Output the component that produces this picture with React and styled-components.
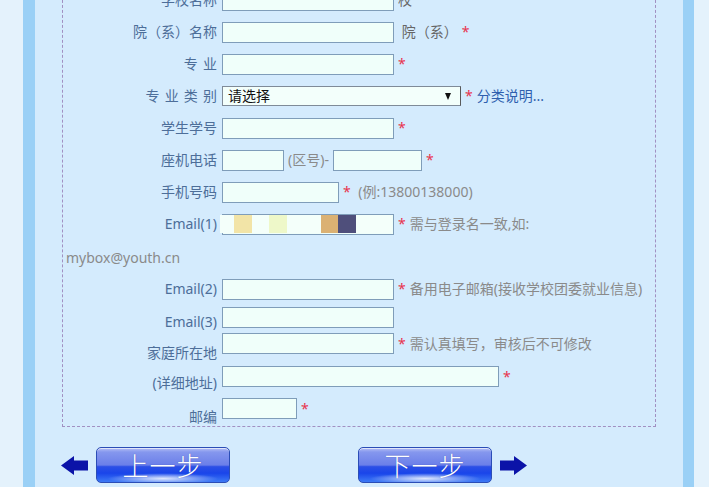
import React from 'react'
import styled, { createGlobalStyle, css } from 'styled-components'

const GlobalStyle = createGlobalStyle`
  html, body {
    margin: 0;
    height: 100%;
    overflow: hidden;
    background: #e4f2fc;
    font-family: "Noto Sans", "Noto Sans CJK SC", sans-serif;
    font-size: 14px;
  }
`

const ArrowIcon = ({ dir }) => (
  <svg width="27" height="19" viewBox="0 0 27 19">
    <path
      d="M0 9.5 L13 0 L13 4.5 L27 4.5 L27 14.5 L13 14.5 L13 19 Z"
      fill="#0b13a8"
      transform={dir === 'right' ? 'translate(27 0) scale(-1 1)' : undefined}
    />
  </svg>
)

export default function App() {
  return (
    <>
      <GlobalStyle />
      <Page>
        <Frame>
          <FormBox>
            <Row $h={32}>
              <Label>学校名称</Label>
              <Field>
                <Input $w={172} />
                <Unit>校</Unit>
              </Field>
            </Row>
            <Row $h={32}>
              <Label>院（系）名称</Label>
              <Field>
                <Input $w={172} />
                <Unit> 院（系）</Unit>
                <Star>*</Star>
              </Field>
            </Row>
            <Row $h={32}>
              <Label>专 业</Label>
              <Field>
                <Input $w={172} />
                <Star>*</Star>
              </Field>
            </Row>
            <Row $h={32}>
              <Label>专 业 类 别</Label>
              <Field>
                <FakeSelect>
                  <span>请选择</span>
                  <Caret />
                </FakeSelect>
                <Star>*</Star>
                <HelpLink>分类说明...</HelpLink>
              </Field>
            </Row>
            <Row $h={32}>
              <Label>学生学号</Label>
              <Field>
                <Input $w={172} />
                <Star>*</Star>
              </Field>
            </Row>
            <Row $h={32}>
              <Label>座机电话</Label>
              <Field>
                <Input $w={62} />
                <Hint>(区号)-</Hint>
                <Input $w={89} />
                <Star>*</Star>
              </Field>
            </Row>
            <Row $h={32}>
              <Label>手机号码</Label>
              <Field>
                <Input $w={117} />
                <Star>*</Star>
                <Hint> (例:13800138000)</Hint>
              </Field>
            </Row>
            <Row $h={32}>
              <Label>Email(1)</Label>
              <Field>
                <MaskedWrap>
                  <Input $w={172} />
                  <Mask>
                    <i />
                    <Block $c="#f2e4a7" />
                    <i />
                    <Block $c="#eef8c9" />
                    <i />
                    <Block $c="#dbb173" />
                    <Block $c="#4f4f7b" />
                  </Mask>
                </MaskedWrap>
                <Star>*</Star>
                <Hint>需与登录名一致,如:</Hint>
              </Field>
            </Row>
            <WrapLine>mybox@youth.cn</WrapLine>
            <Row $h={30}>
              <Label>Email(2)</Label>
              <Field>
                <Input $w={172} />
                <Star>*</Star>
                <Hint>备用电子邮箱(接收学校团委就业信息)</Hint>
              </Field>
            </Row>
            <Row $h={26}>
              <Label $end>Email(3)</Label>
              <Field>
                <Input $w={172} />
              </Field>
            </Row>
            <Row $h={31}>
              <Label $end>家庭所在地</Label>
              <Field $top={3}>
                <Input $w={172} />
                <Star>*</Star>
                <Hint>需认真填写，审核后不可修改</Hint>
              </Field>
            </Row>
            <Row $h={30}>
              <Label $end>(详细地址)</Label>
              <Field $top={5}>
                <Input $w={277} />
                <Star>*</Star>
              </Field>
            </Row>
            <Row $h={34}>
              <Label $end>邮编</Label>
              <Field $top={7}>
                <Input $w={75} />
                <Star>*</Star>
              </Field>
            </Row>
          </FormBox>
          <Nav>
            <StepGroup>
              <ArrowIcon dir="left" />
              <StepButton type="button">上一步</StepButton>
            </StepGroup>
            <StepGroup>
              <StepButton type="button">下一步</StepButton>
              <ArrowIcon dir="right" />
            </StepGroup>
          </Nav>
        </Frame>
      </Page>
    </>
  )
}

const Page = styled.div`
  display: flex;
  height: 100vh;
  padding: 0 15px 0 23px;
  box-sizing: border-box;
`

const Frame = styled.div`
  flex: 1;
  background: #d4ebfd;
  border-left: 12px solid #9ad0f6;
  border-right: 11px solid #9ad0f6;
  padding: 0 27px;
`

const FormBox = styled.div`
  margin-top: -20px;
  border: 1px dashed #a190c2;
  padding: 3px 0 1px;
`

const Row = styled.div`
  display: grid;
  grid-template-columns: 154px 1fr;
  column-gap: 5px;
  height: ${p => p.$h}px;
  align-items: center;
`

const Label = styled.div`
  text-align: right;
  color: #4d6e99;
  line-height: 16px;
  white-space: pre;
  word-spacing: 1.5px;
  align-self: ${p => (p.$end ? 'end' : 'center')};
`

const Field = styled.div`
  display: flex;
  align-items: center;
  gap: 4px;
  ${p =>
    p.$top != null &&
    css`
      align-self: start;
      padding-top: ${p.$top}px;
    `}
`

const Input = styled.input`
  box-sizing: border-box;
  width: ${p => p.$w}px;
  height: 21px;
  margin: 0;
  padding: 0 3px;
  border: 1px solid #7f9db9;
  background: #f0fffa;
  font: inherit;
  outline: none;
`

const MaskedWrap = styled.div`
  position: relative;
  display: flex;
`

const Mask = styled.div`
  position: absolute;
  left: -2px;
  top: 1px;
  width: 172px;
  height: 18px;
  background: #f4fffa;
  display: grid;
  grid-template-columns: 14px 18px 17px 18px 34px 17px 18px;
`

const Block = styled.div`
  background: ${p => p.$c};
`

const Star = styled.span`
  color: #e8344e;
  line-height: 16px;
`

const Unit = styled.span`
  color: #666;
  line-height: 16px;
  white-space: pre;
`

const Hint = styled.span`
  color: #8a8a8a;
  line-height: 16px;
  white-space: pre;
`

const HelpLink = styled.a`
  color: #2f5fae;
  line-height: 16px;
  cursor: pointer;
`

const FakeSelect = styled.div`
  box-sizing: border-box;
  width: 239px;
  height: 20px;
  display: flex;
  align-items: center;
  justify-content: space-between;
  padding: 0 9px 0 5px;
  border: 1px solid #7f8b98;
  border-right-color: #5a5a5a;
  background: #f3fffb;
  color: #111;
  line-height: 16px;
`

const Caret = styled.span`
  width: 0;
  height: 0;
  border-left: 3.5px solid transparent;
  border-right: 3.5px solid transparent;
  border-top: 7px solid #111;
`

const WrapLine = styled.div`
  height: 34px;
  display: flex;
  align-items: center;
  padding-left: 3px;
  color: #8a8a8a;
`

const Nav = styled.div`
  display: flex;
  align-items: center;
  gap: 128px;
  margin: 20px 0 0 -1px;
`

const StepGroup = styled.div`
  display: flex;
  align-items: center;
  gap: 8px;
`

const StepButton = styled.button`
  width: 134px;
  height: 36px;
  padding: 0;
  border: 1px solid #2b4db6;
  border-radius: 5px;
  background:
    radial-gradient(ellipse 42% 16% at 50% 90%, rgba(255, 255, 255, 0.85), rgba(255, 255, 255, 0)),
    linear-gradient(to bottom, #b6c0f5 0%, #8597ee 12%, #6b7fe9 50%, #2c4fe6 55%, #1a45ea 74%, #3d7af6 100%);
  box-shadow: inset 0 1px 0 rgba(255, 255, 255, 0.6);
  color: #fff;
  font-family: "Noto Sans CJK SC", sans-serif;
  font-size: 26px;
  font-weight: 300;
  letter-spacing: 1px;
  line-height: 1;
  text-shadow: 0 0 1px rgba(30, 40, 120, 0.5);
  cursor: pointer;
`
